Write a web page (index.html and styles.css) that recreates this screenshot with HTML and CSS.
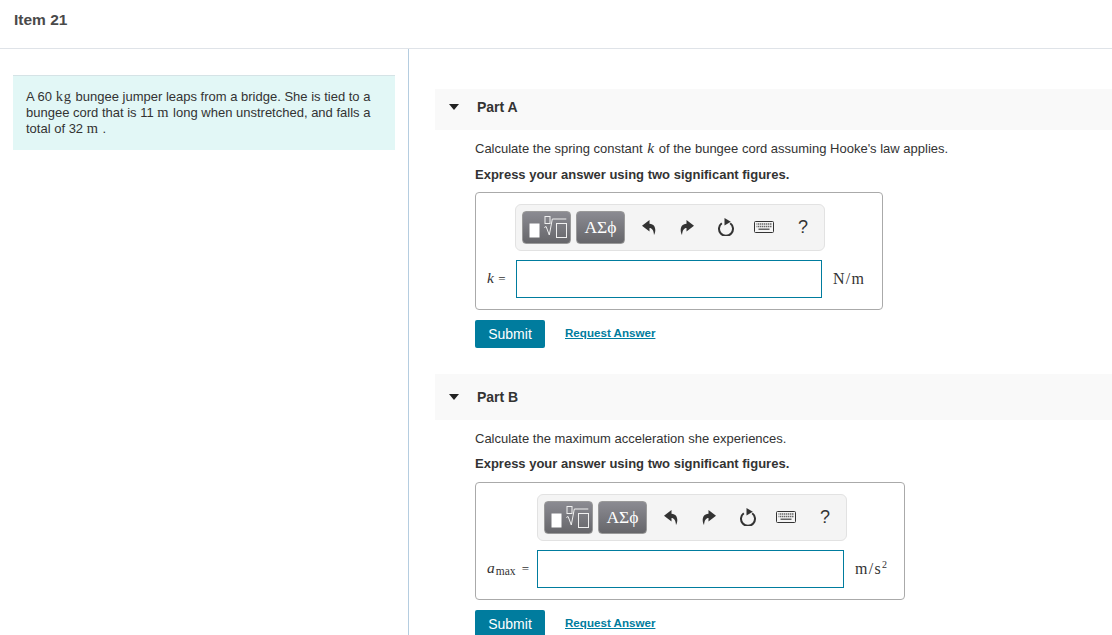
FILE: index.html
```html
<!DOCTYPE html>
<html lang="en">
<head>
<meta charset="utf-8">
<title>Item 21</title>
<link rel="stylesheet" href="styles.css">
</head>
<body>
<svg class="defs" width="0" height="0" aria-hidden="true">
  <symbol id="i-undo" viewBox="0 0 14 15"><path d="M7.500 0 0 5.700 7.500 11.500V8C10 8 11.500 10 12 15 14 12 14.500 4 7.500 3.700z"/></symbol>
  <symbol id="i-redo" viewBox="0 0 14 15"><path d="M6.500 0 14 5.700 6.500 11.500V8C4 8 2.500 10 2 15 0 12-.5 4 6.500 3.700z"/></symbol>
  <symbol id="i-reset" viewBox="0 0 18 18"><path class="stroke" d="M4.800 5.200a7 7 0 1 0 8.400 0"/><path d="M7.500 0 13.800 3.800 7.500 7.500z"/></symbol>
  <symbol id="i-keys" viewBox="0 0 20 12"><rect class="kbd" x=".5" y=".5" width="19" height="11" rx="1"/><path class="keys" d="M2.500 3h15M2.500 5.500h15M4.500 8.300h11" /><path class="keygap" d="M3.500 2v5M5.500 2v5M7.500 2v5M9.500 2v5M11.500 2v5M13.500 2v5M15.500 2v5"/></symbol>
  <symbol id="i-tmpl" viewBox="1 1 47 31"><rect class="fill-w" x="7.500" y="12.500" width="10" height="14"/><rect class="line-w" x="23" y="5.500" width="5" height="7"/><path class="line-w" d="M22.300 16.500l1.800-1 3.200 8.500 3-16h14"/><rect class="line-w" x="34.500" y="12.500" width="10" height="14"/></symbol>
</svg>

<header class="topbar"><h1 class="item-title">Item 21</h1></header>

<main class="layout">
  <aside class="intro">
    <div class="intro-box">
      <p>A 60 <span class="unit">kg</span> bungee jumper leaps from a bridge. She is tied to a bungee cord that is 11 <span class="unit">m</span> long when unstretched, and falls a total of 32 <span class="unit">m</span> .</p>
    </div>
  </aside>

  <section class="parts">
    <article class="part part-a">
      <div class="part-head"><span class="caret"></span><h2>Part A</h2></div>
      <div class="part-body">
        <p class="prompt">Calculate the spring constant <i class="math">k</i> of the bungee cord assuming Hooke's law applies.</p>
        <p class="express">Express your answer using two significant figures.</p>
        <div class="answer answer-a">
          <div class="toolbar toolbar-a">
            <button class="tool-btn" type="button"><svg class="tmpl"><use href="#i-tmpl"/></svg></button>
            <button class="tool-btn greek" type="button">ΑΣϕ</button>
            <div class="tool-icons">
              <svg class="ic-arrow"><use href="#i-undo"/></svg>
              <svg class="ic-arrow"><use href="#i-redo"/></svg>
              <svg class="ic-reset"><use href="#i-reset"/></svg>
              <svg class="ic-keys"><use href="#i-keys"/></svg>
              <span class="ic-help">?</span>
            </div>
          </div>
          <div class="entry">
            <span class="var"><i class="math">k</i> =</span>
            <div class="field"></div>
            <span class="units">N/m</span>
          </div>
        </div>
        <div class="actions">
          <button class="submit" type="button">Submit</button>
          <a class="request" href="#">Request Answer</a>
        </div>
      </div>
    </article>

    <article class="part part-b">
      <div class="part-head"><span class="caret"></span><h2>Part B</h2></div>
      <div class="part-body">
        <p class="prompt">Calculate the maximum acceleration she experiences.</p>
        <p class="express">Express your answer using two significant figures.</p>
        <div class="answer answer-b">
          <div class="toolbar toolbar-b">
            <button class="tool-btn" type="button"><svg class="tmpl"><use href="#i-tmpl"/></svg></button>
            <button class="tool-btn greek" type="button">ΑΣϕ</button>
            <div class="tool-icons">
              <svg class="ic-arrow"><use href="#i-undo"/></svg>
              <svg class="ic-arrow"><use href="#i-redo"/></svg>
              <svg class="ic-reset"><use href="#i-reset"/></svg>
              <svg class="ic-keys"><use href="#i-keys"/></svg>
              <span class="ic-help">?</span>
            </div>
          </div>
          <div class="entry">
            <span class="var"><i class="math">a</i><span class="sub">max</span> =</span>
            <div class="field"></div>
            <span class="units">m/s<sup>2</sup></span>
          </div>
        </div>
        <div class="actions">
          <button class="submit" type="button">Submit</button>
          <a class="request" href="#">Request Answer</a>
        </div>
      </div>
    </article>
  </section>
</main>
</body>
</html>
```

FILE: styles.css
```css
* { box-sizing: border-box; }
html, body { margin: 0; height: 635px; overflow: hidden; background: #fff; }
body { font-family: "Liberation Sans", Arial, sans-serif; color: #333; font-size: 13px; line-height: 16px; }
.defs { display: block; height: 0; }
p, h1, h2 { margin: 0; }

.topbar { height: 49px; border-bottom: 1px solid #dfe3e8; padding: 10px 0 0 14px; }
.item-title { font-size: 15.500px; line-height: 20px; font-weight: 700; color: #4a4a4a; }

.layout { display: flex; height: 586px; }
.intro { width: 409px; flex: none; border-right: 1px solid #b5cde0; padding: 26px 13px 0 13px; }
.intro-box { background: #e2f7f6; border-top: 1px solid #d5e3e6; height: 75px; padding: 13px 13px 0 13px; }
.intro-box p { font-size: 13px; line-height: 16px; color: #333; }
.unit { display: inline-block; font-family: "Liberation Serif", serif; font-size: 14.500px; line-height: 14px; letter-spacing: .9px; }

.parts { flex: 1; padding: 40px 0 0 26px; min-width: 0; }
.part-b { margin-top: 26px; }
.part-head { height: 41px; background: #f9f9f9; display: flex; align-items: center; padding-left: 14px; padding-bottom: 5px; }
.part-b .part-head { height: 46px; padding-bottom: 0; }
.caret { width: 0; height: 0; border-left: 5.500px solid transparent; border-right: 5.500px solid transparent; border-top: 6px solid #222; }
.part-head h2 { font-size: 14px; line-height: 16px; font-weight: 700; color: #333; margin-left: 18px; }
.part-body { padding: 11px 0 0 40px; }
.prompt { font-size: 13px; line-height: 16px; color: #333; height: 16px; }
.math { display: inline-block; font-family: "Liberation Serif", serif; font-style: italic; font-size: 15.500px; line-height: 14px; margin: 0 1px; }
.express { font-size: 13px; line-height: 16px; font-weight: 700; color: #333; margin-top: 9px; }
.part-a .express { margin-top: 10px; }

.answer { margin-top: 10px; border: 1px solid #aaa; border-radius: 4px; height: 118px; padding: 11px 0 0 0; }
.answer-a { width: 408px; margin-top: 9px; }
.answer-b { width: 430px; }
.toolbar { width: 310px; height: 47px; background: #f4f4f4; border: 1px solid #e2e2e2; border-radius: 6px; display: flex; align-items: center; padding: 0 0 1px 6px; gap: 5px; }
.toolbar-a { margin-left: 39px; }
.toolbar-b { margin-left: 61px; }
.tool-btn { width: 49px; height: 33px; padding: 0; border: 1px solid #9a9a9a; border-radius: 4px; background: linear-gradient(#8b8b92, #66666a); color: #fff; font-family: "Liberation Serif", serif; font-size: 17.500px; display: flex; align-items: center; justify-content: center; }
.tmpl { width: 47px; height: 31px; flex: none; }
.fill-w { fill: #fff; }
.line-w { fill: none; stroke: #f0f0f0; stroke-width: 1; }
.tool-icons { display: flex; align-items: center; margin-left: 12px; }
.ic-arrow { width: 14px; height: 15px; fill: #333; margin-right: 24px; }
.ic-reset { width: 18px; height: 18px; fill: #333; margin-left: -1px; margin-right: 19px; }
.stroke { fill: none; stroke: #333; stroke-width: 2; }
.ic-keys { width: 20px; height: 12px; margin-right: 24px; }
.kbd { fill: #f4f4f4; stroke: #333; }
.keys { stroke: #666; stroke-width: 1.500; fill: none; }
.keygap { stroke: #f4f4f4; stroke-width: .6; fill: none; }
.ic-help { font-size: 18px; line-height: 20px; color: #333; }

.entry { display: flex; align-items: center; margin-top: 9px; height: 38px; }
.var { font-family: "Liberation Serif", serif; font-size: 13px; color: #333; white-space: nowrap; padding-left: 10px; }
.answer-a .var { width: 40px; }
.answer-b .var { width: 61px; }
.sub { font-size: 11.500px; position: relative; top: 2px; margin-right: 3px; }
.field { width: 306px; height: 38px; background: #fff; border: 1px solid #007c9e; flex: none; }
.answer-b .field { width: 307px; }
.units { font-family: "Liberation Serif", serif; font-size: 16px; letter-spacing: 1.300px; color: #333; margin-left: 11px; }
.units sup { font-size: 10px; line-height: 0; }

.actions { display: flex; align-items: center; margin-top: 10px; height: 28px; }
.submit { width: 70px; height: 28px; border: 0; border-radius: 2px; background: #007c9e; color: #fff; font-family: "Liberation Sans", Arial, sans-serif; font-size: 14px; padding: 0; }
.request { margin-left: 20px; padding-bottom: 2px; font-size: 11.600px; font-weight: 700; color: #007c9e; text-decoration: underline; }
```
